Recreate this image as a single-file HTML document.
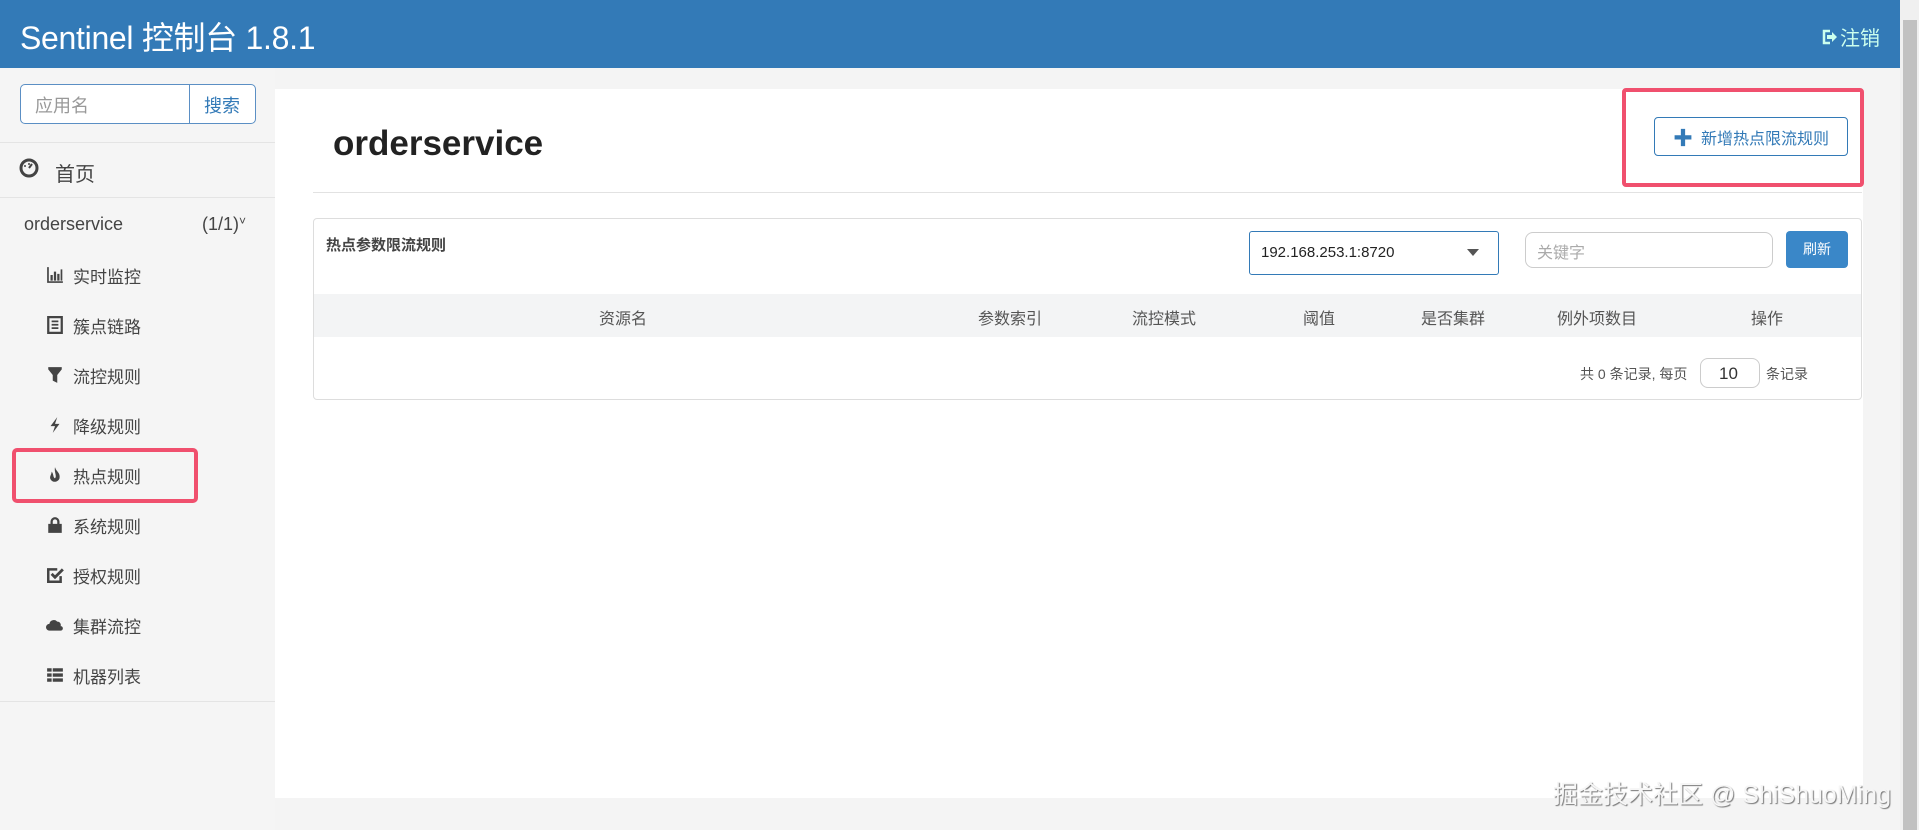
<!DOCTYPE html>
<html><head><meta charset="utf-8">
<style>
*{box-sizing:border-box;margin:0;padding:0}
body{width:1919px;height:830px;overflow:hidden;background:#f4f4f4;font-family:"Liberation Sans","Noto Sans CJK SC",sans-serif;position:relative;color:#333}
.abs{position:absolute}
.hdr{left:0;top:0;width:1900px;height:68px;background:#337ab7}
.hdr .t{left:20px;top:13px;font-size:32px;color:#fff;white-space:nowrap;letter-spacing:-0.3px}
.scroll{left:1900px;top:0;width:19px;height:830px;background:#f0f0f0}
.thumb{left:1903px;top:20px;width:14px;height:810px;background:#c1c1c1}
.side{left:0;top:68px;width:275px;height:762px;background:#f5f5f5}
.main{left:275px;top:89px;width:1588px;height:709px;background:#fff}
.mi{left:46px;font-size:17px;color:#444;white-space:nowrap;display:flex;align-items:center;gap:9px;height:24px}
.mi svg{width:18px;height:18px;fill:#444;flex:none}
.th{top:305px;font-size:16px;color:#555;transform:translateX(-50%);white-space:nowrap}
</style></head><body>
<div class="abs hdr"><div class="abs t">Sentinel 控制台 1.8.1</div>
<div class="abs" style="left:1820px;top:22px;font-size:20px;color:#cfe;white-space:nowrap;display:flex;align-items:center;gap:2px"><svg width="18" height="18" viewBox="0 0 18 18"><path d="M10 3H4v12h6" fill="none" stroke="#cfe" stroke-width="2.5"/><path d="M7 7h5V4l5 5-5 5v-3H7z" fill="#cfe"/></svg>注销</div></div>
<div class="abs scroll"></div><div class="abs thumb"></div>
<div class="abs side"></div>
<div class="abs" style="left:20px;top:84px;width:236px;height:40px;border:1px solid #5b8fc4;border-radius:5px;background:#fff"></div>
<div class="abs" style="left:189px;top:84px;width:1px;height:40px;background:#5b8fc4"></div>
<div class="abs" style="left:35px;top:92px;font-size:18px;color:#999">应用名</div>
<div class="abs" style="left:204px;top:92px;font-size:18px;color:#337ab7">搜索</div>
<div class="abs" style="left:0;top:142px;width:275px;height:1px;background:#e4e4e4"></div>
<div class="abs" style="left:0;top:197px;width:275px;height:1px;background:#e4e4e4"></div>
<div class="abs" style="left:0;top:701px;width:275px;height:1px;background:#e4e4e4"></div>
<svg class="abs" style="left:19px;top:158px" width="20" height="20" viewBox="0 0 20 20"><circle cx="10" cy="10" r="8" fill="none" stroke="#444" stroke-width="3"/><path d="M10 10l3-4" stroke="#444" stroke-width="2"/><circle cx="6" cy="8" r="1" fill="#444"/><circle cx="10" cy="6" r="1" fill="#444"/></svg>
<div class="abs" style="left:55px;top:158px;font-size:20px;color:#444">首页</div>
<div class="abs" style="left:24px;top:214px;font-size:18px;color:#444">orderservice</div>
<div class="abs" style="left:202px;top:214px;font-size:18px;color:#444">(1/1)<span style="font-size:12px;vertical-align:top">˅</span></div>
<div class="abs mi" style="top:263px"><svg viewBox="0 0 16 16"><path d="M1 1h1.5v12.5H15V15H1z M4 8h2v5H4z M7 5h2v8H7z M10 7h2v6h-2z M13 3h1.5v10H13z"/></svg>实时监控</div>
<div class="abs mi" style="top:313px"><svg viewBox="0 0 16 16"><path d="M2 1h12v14H2z" fill="none" stroke="#444" stroke-width="2"/><path d="M5 4h6v1.5H5zM5 7h6v1.5H5zM5 10h6v1.5H5z"/></svg>簇点链路</div>
<div class="abs mi" style="top:363px"><svg viewBox="0 0 16 16"><path d="M2 1h12v2l-4 5v7l-4-2V8L2 3z"/></svg>流控规则</div>
<div class="abs mi" style="top:413px"><svg viewBox="0 0 16 16"><path d="M10 1L4 9h4l-2 6 6-8H8z"/></svg>降级规则</div>
<div class="abs mi" style="top:463px"><svg viewBox="0 0 16 16"><path d="M8 1c1 4 5 5 4 10-1 3-5 4-7 2-3-3 0-5 0-8 2 2 1 5 3 6 2-2-1-6 0-10z"/></svg>热点规则</div>
<div class="abs mi" style="top:513px"><svg viewBox="0 0 16 16"><path d="M4 7V5a4 4 0 018 0v2h-2V5a2 2 0 00-4 0v2zM2 7h12v8H2z"/></svg>系统规则</div>
<div class="abs mi" style="top:563px"><svg viewBox="0 0 16 16"><path d="M13 9v5H2V3h8" fill="none" stroke="#444" stroke-width="2.2"/><path d="M5 7l3 3 7-7" fill="none" stroke="#444" stroke-width="2.5"/></svg>授权规则</div>
<div class="abs mi" style="top:613px"><svg viewBox="0 0 16 16"><path d="M3 13a3 3 0 010-6 4 4 0 017-2 3 3 0 013 4 2 2 0 010 4z"/></svg>集群流控</div>
<div class="abs mi" style="top:663px"><svg viewBox="0 0 16 16"><path d="M1 2h4v3H1zM6 2h9v3H6zM1 6.5h4v3H1zM6 6.5h9v3H6zM1 11h4v3H1zM6 11h9v3H6z"/></svg>机器列表</div>
<div class="abs" style="left:12px;top:448px;width:186px;height:55px;border:4px solid #f0506e;border-radius:5px"></div>
<div class="abs main"></div>
<div class="abs" style="left:333px;top:124px;font-size:35px;font-weight:bold;color:#222">orderservice</div>
<div class="abs" style="left:313px;top:192px;width:1549px;height:1px;background:#e2e2e2"></div>
<div class="abs" style="left:1654px;top:117px;width:194px;height:39px;border:1px solid #337ab7;border-radius:4px;background:#fff;color:#337ab7;font-size:16px;display:flex;align-items:center;justify-content:center;gap:8px"><b style="font-size:20px">✚</b>新增热点限流规则</div>
<div class="abs" style="left:1622px;top:88px;width:242px;height:99px;border:4px solid #f0506e;border-radius:4px"></div>
<div class="abs" style="left:313px;top:218px;width:1549px;height:182px;border:1px solid #ddd;border-radius:4px"></div>
<div class="abs" style="left:326px;top:234px;font-size:15px;font-weight:bold;color:#444">热点参数限流规则</div>
<div class="abs" style="left:1249px;top:231px;width:250px;height:44px;border:1px solid #337ab7;border-radius:3px"></div>
<div class="abs" style="left:1261px;top:244px;font-size:15px;color:#222">192.168.253.1:8720</div>
<div class="abs" style="left:1467px;top:249px;width:0;height:0;border-left:6px solid transparent;border-right:6px solid transparent;border-top:7px solid #555"></div>
<div class="abs" style="left:1525px;top:232px;width:248px;height:36px;border:1px solid #ccc;border-radius:8px"></div>
<div class="abs" style="left:1537px;top:239px;font-size:16px;color:#aaa">关键字</div>
<div class="abs" style="left:1786px;top:231px;width:62px;height:37px;background:#3a87c8;border-radius:4px;color:#fff;font-size:14px;text-align:center;line-height:37px">刷新</div>
<div class="abs" style="left:314px;top:294px;width:1547px;height:43px;background:#f3f4f5"></div>
<div class="abs th" style="left:623px">资源名</div>
<div class="abs th" style="left:1010px">参数索引</div>
<div class="abs th" style="left:1164px">流控模式</div>
<div class="abs th" style="left:1319px">阈值</div>
<div class="abs th" style="left:1453px">是否集群</div>
<div class="abs th" style="left:1597px">例外项数目</div>
<div class="abs th" style="left:1767px">操作</div>
<div class="abs" style="left:1580px;top:364px;font-size:14px;color:#555;white-space:nowrap">共 0 条记录, 每页</div>
<div class="abs" style="left:1700px;top:358px;width:60px;height:30px;border:1px solid #ccc;border-radius:8px;font-size:17px;color:#333;padding:5px 0 0 18px">10</div>
<div class="abs" style="left:1766px;top:364px;font-size:14px;color:#555">条记录</div>
<div class="abs" style="left:1553px;top:775px;font-size:25px;color:#f6f6f6;white-space:nowrap;text-shadow:1px 1px 1px #777">掘金技术社区 @ ShiShuoMing</div>
</body></html>
